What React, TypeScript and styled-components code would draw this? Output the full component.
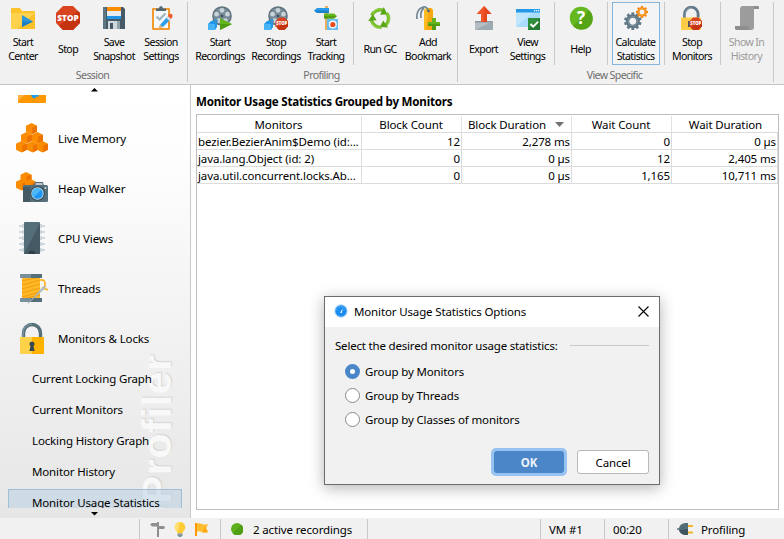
import React from "react";
import styled, { createGlobalStyle, css } from "styled-components";

const GlobalStyle = createGlobalStyle`
  * { box-sizing: border-box; }
  html, body { margin: 0; padding: 0; }
  body {
    width: 784px;
    height: 539px;
    overflow: hidden;
    font-family: "Noto Sans", "Open Sans", sans-serif;
    font-size: 11.5px;
    letter-spacing: -0.14px;
    color: #000;
    background: #f1f1f1;
  }
`;

const Window = styled.div`
  position: relative;
  width: 784px;
  height: 539px;
  display: grid;
  grid-template-rows: 85px 433px 21px;
  background: #f1f1f1;
`;

/* ---------- toolbar ---------- */

const Toolbar = styled.header`
  display: flex;
  border-bottom: 1px solid #c4c4c4;
  padding-top: 2px;
  font-size: 10.6px;
  letter-spacing: -0.62px;
`;

const ToolGroup = styled.section<{ $width: number }>`
  width: ${(p) => p.$width}px;
  height: 80px;
  display: flex;
  flex-direction: column;
  border-right: 1px solid #c8c8c8;
`;

const ToolRow = styled.div<{ $inset: number }>`
  display: flex;
  height: 63px;
  padding-left: ${(p) => p.$inset}px;
`;

const ToolButton = styled.button<{ $width: number; $active?: boolean; $disabled?: boolean }>`
  flex: 0 0 ${(p) => p.$width}px;
  height: 63px;
  display: flex;
  flex-direction: column;
  align-items: center;
  padding: ${(p) => (p.$active ? 3 : 4)}px 1px 0 0;
  margin: 0;
  border: ${(p) => (p.$active ? "1px solid #88b5da" : "0")};
  background: ${(p) => (p.$active ? "#f2f4f6" : "transparent")};
  font: inherit;
  letter-spacing: inherit;
  color: ${(p) => (p.$disabled ? "#9b9b9b" : "#000")};
  svg { display: block; flex: none; }
`;

const ToolLabel = styled.span`
  height: 28px;
  margin-top: 5px;
  display: flex;
  flex-direction: column;
  justify-content: center;
  line-height: 14px;
  white-space: nowrap;
`;

const ToolDivider = styled.div`
  flex: 0 0 1px;
  height: 63px;
  margin: 0 4px 0 4px;
  background: #c8c8c8;
`;

const GroupLabel = styled.div`
  flex: 1;
  text-align: center;
  line-height: 21px;
  padding-right: 2px;
  color: #6e6e6e;
`;

/* ---------- sidebar ---------- */

const Body = styled.div`
  display: grid;
  grid-template-columns: 191px 1fr;
  min-height: 0;
`;

const Sidebar = styled.nav`
  position: relative;
  display: grid;
  grid-template-rows: 10px 413px 10px;
  border-right: 1px solid #c8c8c8;
  background: linear-gradient(#ffffff, #fdfdfd 18%, #f1f1f1 60%, #e6e6e6);
  overflow: hidden;
`;

const Scroller = styled.div<{ $down?: boolean }>`
  display: flex;
  justify-content: center;
  padding-top: ${(p) => (p.$down ? 4 : 3)}px;
  padding-right: 1px;
  svg { display: block; }
`;

const NavViewport = styled.div`
  position: relative;
  overflow: hidden;
  display: flex;
  flex-direction: column;
`;

const Watermark = styled.div`
  position: absolute;
  left: 134px;
  bottom: -19px;
  width: 46px;
  line-height: 46px;
  writing-mode: vertical-rl;
  transform: rotate(180deg);
  font-family: "Liberation Sans", sans-serif;
  font-weight: 700;
  font-size: 41px;
  letter-spacing: 0.7px;
  color: #f8f8f8;
  text-shadow: 1px 1px 1px #d4d4d4;
  white-space: nowrap;
`;

const NavItem = styled.div`
  position: relative;
  flex: 0 0 50px;
  display: flex;
  align-items: center;
  padding-left: 16px;
  gap: 10px;
  svg { flex: none; }
`;

const NavPartial = styled.div`
  flex: 0 0 18px;
  padding-left: 16px;
  svg { display: block; }
`;

const SubItem = styled.div<{ $selected?: boolean }>`
  position: relative;
  flex: 0 0 31px;
  line-height: 29px;
  margin: 0 8px;
  padding-left: 23px;
  white-space: nowrap;
  border: 1px solid transparent;
  ${(p) =>
    p.$selected &&
    css`
      margin-top: 2px;
      flex-basis: 27px;
      line-height: 25px;
      border-color: #9fbfd6;
      background: rgba(183, 207, 226, 0.5);
    `}
`;

/* ---------- content ---------- */

const Content = styled.main`
  background: #fff;
  padding: 8px 5px 8px 5px;
  display: grid;
  grid-template-rows: 21px 1fr;
`;

const Heading = styled.h1`
  margin: 0;
  font-size: 11.6px;
  line-height: 18px;
  font-weight: 700;
  letter-spacing: -0.23px;
  white-space: nowrap;
`;

const TableFrame = styled.div`
  border: 1px solid #bebebe;
  letter-spacing: -0.11px;
`;

const TableRow = styled.div<{ $head?: boolean }>`
  display: grid;
  grid-template-columns: 165px 100px 110px 100px 106px;
  height: ${(p) => (p.$head ? 18 : 17)}px;
  border-bottom: 1px solid #dcdcdc;
`;

const HeadCell = styled.div`
  display: flex;
  align-items: center;
  justify-content: center;
  gap: 9px;
  margin: 1px 0;
  padding: 1px 1px 0 0;
  border-right: 1px solid #e2e2e2;
  line-height: 15px;
  white-space: nowrap;
  &:last-child { border-right-color: transparent; padding: 1px 0 0 2px; }
`;

const Cell = styled.div<{ $left?: boolean }>`
  line-height: 17px;
  padding: 0 1px;
  text-align: ${(p) => (p.$left ? "left" : "right")};
  border-right: 1px solid #dcdcdc;
  white-space: nowrap;
`;

/* ---------- dialog ---------- */

const Dialog = styled.div`
  position: absolute;
  left: 324px;
  top: 296px;
  width: 336px;
  height: 189px;
  border: 1px solid #6c6c6c;
  background: #f1f1f1;
  box-shadow: 0 3px 14px rgba(0, 0, 0, 0.3);
  display: grid;
  grid-template-rows: 30px 1fr 46px;
`;

const TitleBar = styled.div`
  display: flex;
  align-items: center;
  padding: 0 10px 2px 9px;
  background: #fff;
  svg { flex: none; }
`;

const TitleText = styled.span`
  flex: 1;
  margin-left: 6px;
  padding-top: 1px;
`;

const DialogBody = styled.div`
  padding: 10px 10px 0 10px;
`;

const Legend = styled.div`
  display: flex;
  align-items: center;
  justify-content: space-between;
  height: 16px;
  margin-bottom: 6px;
  letter-spacing: -0.19px;
`;

const Rule = styled.div`
  width: 79px;
  height: 1px;
  background: #c8c8c8;
`;

const RadioRow = styled.div`
  height: 24px;
  display: flex;
  align-items: center;
  padding-left: 10px;
  gap: 5px;
`;

const RadioDot = styled.span<{ $checked?: boolean }>`
  width: 15px;
  height: 15px;
  border-radius: 50%;
  background: #fff;
  border: ${(p) => (p.$checked ? "5px solid #4a86c8" : "1px solid #8a8a8a")};
`;

const Actions = styled.div`
  display: flex;
  justify-content: flex-end;
  gap: 10px;
  padding: 10px 10px 0 0;
`;

const DialogButton = styled.button<{ $primary?: boolean }>`
  width: ${(p) => (p.$primary ? 76 : 72)}px;
  height: ${(p) => (p.$primary ? 28 : 24)}px;
  margin-top: ${(p) => (p.$primary ? 0 : 2)}px;
  padding: 0;
  font: inherit;
  font-weight: ${(p) => (p.$primary ? 700 : 400)};
  letter-spacing: inherit;
  border-radius: ${(p) => (p.$primary ? 5 : 3)}px;
  border: ${(p) => (p.$primary ? "3px solid #97c3f3" : "1px solid #b9b9b9")};
  background: ${(p) => (p.$primary ? "#4a86c8" : "#fff")};
  background-clip: padding-box;
  color: ${(p) => (p.$primary ? "#eef3f9" : "#000")};
`;

/* ---------- status bar ---------- */

const StatusBar = styled.footer`
  display: flex;
  background: #f1f1f1;
`;

const StatusCell = styled.div<{ $width?: number; $pad?: number; $gap?: number }>`
  ${(p) => (p.$width ? `flex: 0 0 ${p.$width}px;` : "flex: 1;")}
  display: flex;
  align-items: center;
  gap: ${(p) => p.$gap ?? 0}px;
  padding: 0 0 0 ${(p) => p.$pad ?? 0}px;
  margin-top: 1px;
  border-right: 1px solid #c8c8c8;
  white-space: nowrap;
  &:last-child { border-right: 0; }
`;

/* ---------- icons ---------- */

const Icon24 = ({ children }: { children: React.ReactNode }) => (
  <svg width="24" height="24" viewBox="0 0 24 24">{children}</svg>
);
const Icon32 = ({ children }: { children: React.ReactNode }) => (
  <svg width="32" height="32" viewBox="0 0 32 32">{children}</svg>
);

const StopSign = ({ x = 0, y = 0, s = 24 }: { x?: number; y?: number; s?: number }) => (
  <g transform={`translate(${x} ${y}) scale(${s / 24})`}>
    <path d="M7 0h10l7 7v10l-7 7H7l-7-7V7z" fill="#d9431f" />
    <path d="M24 7v10l-7 7H7l-4-4L22 5z" fill="#c43410" />
    <text x="12" y="14.9" textAnchor="middle" fontSize="8.2" fontWeight="800" letterSpacing="0" fontFamily="Open Sans, sans-serif" fill="#fff">
      STOP
    </text>
  </g>
);

const StartCenterIcon = () => (
  <Icon24>
    <path d="M0 3q0-1 1-1h8l2 3h12q1 0 1 1v16q0 1-1 1H1q-1 0-1-1z" fill="#fdc32b" />
    <path d="M0 7h24v15q0 1-1 1H1q-1 0-1-1z" fill="#ffd24d" />
    <path d="M24 7v16H6z" fill="#fcc02a" />
    <path d="M11 9l11 6.500L11 21z" fill="#2b97d8" />
    <path d="M11 15.500h11L11 21z" fill="#1c7fc0" />
  </Icon24>
);

const SaveIcon = () => (
  <Icon24>
    <path d="M1 1h20l2 2v20H1z" fill="#455a66" />
    <path d="M1 1h3v22H1z" fill="#5d7683" />
    <path d="M5 1h14v4H5z" fill="#fb8c00" />
    <path d="M5 5h14v6H5z" fill="#e6ebee" />
    <path d="M5 10h14v3H5z" fill="#2196e8" />
    <path d="M6 15h12v8H6z" fill="#cfd8dc" />
    <path d="M8 17h3v6H8z" fill="#455a66" />
    <path d="M15 15h3v8h-3z" fill="#8fa2ab" />
  </Icon24>
);

const SessionSettingsIcon = () => (
  <Icon24>
    <rect x="3" y="2" width="18" height="22" rx="1" fill="#f29a2c" />
    <path d="M5 4h14v18H5z" fill="#f4f8fa" />
    <path d="M7 5V2.500h3q0-2.500 2-2.500t2 2.500h3V5z" fill="#526a78" />
    <path d="M7.500 10.500l3 3 6-6" stroke="#9fb3bd" strokeWidth="2.200" fill="none" />
    <path d="M11 19l7-8 3 3-7 7-4 1z" fill="#2ea0ea" />
    <path d="M11 19l-2 4 5-2z" fill="#e8b27a" />
    <path d="M18.500 10.500l1.500-2.500q2-1 3.500 1v2l-2 2.500z" fill="#ee5b31" />
    <path d="M17.200 11.800l1.500-1.700 3.400 3-1.700 1.900z" fill="#d4dde1" />
  </Icon24>
);

const ReelBase = () => (
  <>
    <circle cx="14" cy="10" r="9.800" fill="#5d707c" />
    <circle cx="14" cy="10" r="8.600" fill="#768b97" />
    <g fill="#c9d2d7">
      <circle cx="14" cy="4.300" r="2.400" />
      <circle cx="8.600" cy="8.200" r="2.400" />
      <circle cx="19.400" cy="8.200" r="2.400" />
      <circle cx="10.600" cy="14.600" r="2.400" />
      <circle cx="17.400" cy="14.600" r="2.400" />
    </g>
    <circle cx="14" cy="10" r="1.300" fill="#394c57" />
    <path d="M0 18l3-3h6v6l-2 3H0z" fill="#2196e8" />
    <path d="M0 18h7v6H0z" fill="#45b3f5" />
    <path d="M4 14.500l4-2 2 2-1 3z" fill="#3d8fc5" />
  </>
);
const StartRecordingsIcon = () => (
  <Icon24>
    <ReelBase />
    <path d="M12 12l12 6-12 6z" fill="#62b51c" />
    <path d="M12 18h12l-12 6z" fill="#4d9c12" />
  </Icon24>
);
const StopRecordingsIcon = () => (
  <Icon24>
    <ReelBase />
    <StopSign x={11.500} y={11.500} s={12.500} />
  </Icon24>
);

const TrackingIcon = () => (
  <Icon24>
    <path d="M11 0h3v24h-3z" fill="#e9ad63" />
    <path d="M0 4.500L3 2h12v5H3z" fill="#289bea" />
    <path d="M0 4.500h15V7H3z" fill="#1d82cc" />
    <path d="M10 7.500h10l3 2.500-3 2.500H10z" fill="#66b51f" />
    <path d="M10 10h13l-3 2.500H10z" fill="#529c15" />
    <path d="M13 13h11v11H13z" fill="#65bdf2" />
    <circle cx="18.800" cy="18.500" r="4" fill="#f5f9fb" />
    <circle cx="18.800" cy="18.500" r="2.600" fill="#e84b1e" />
  </Icon24>
);

const RecycleIcon = () => (
  <Icon24>
    {[0, 120, 240].map((a) => (
      <g key={a} transform={`rotate(${a} 12 12.500)`}>
        <path d="M3.900 9.500a8.800 8.800 0 0 1 11-5.200" fill="none" stroke="#74bd28" strokeWidth="3.400" />
        <path d="M4.500 8a8.800 8.800 0 0 1 9-5" fill="none" stroke="#95d14b" strokeWidth="1" />
        <path d="M15.800 1l3.600 7.400-7.200.3z" fill="#5aa619" />
      </g>
    ))}
  </Icon24>
);

const BookmarkIcon = () => (
  <Icon24>
    <path d="M8 4l2-2h5l2 2v20H8z" fill="#fdbc23" />
    <path d="M13 2h2l2 2v20H10z" fill="#f8a80e" />
    <path d="M1 13q-1-9 5-11.500Q11-.5 12.500 5M5 12q-1-7 3-10" fill="none" stroke="#718692" strokeWidth="1.700" />
    <circle cx="12.500" cy="5" r="1.300" fill="#51646f" />
    <path d="M16 12h4v4h4v4h-4v4h-4v-4h-4v-4h4z" fill="#62b51c" />
    <path d="M12 18h12v2h-4v4h-4v-4h-4z" fill="#4e9d14" />
  </Icon24>
);

const ExportIcon = () => (
  <Icon24>
    <path d="M3 15h18v9H3z" fill="#b6bec3" />
    <path d="M3 15h18v1.500H3z" fill="#8a99a2" />
    <path d="M3 24L21 15v9z" fill="#9eabb2" />
    <path d="M12 0l7.500 8H15v8H9V8H4.500z" fill="#f0562a" />
    <path d="M12 0l7.500 8H15v8h-3z" fill="#e5471c" />
  </Icon24>
);

const ViewSettingsIcon = () => (
  <Icon24>
    <path d="M0 3h24v18H0z" fill="#a8dcfa" />
    <path d="M0 21V6h17z" fill="#bfe6fc" />
    <path d="M0 3h24v3.500H0z" fill="#2499e8" />
    <path d="M18 4h1.300v1.300H18zM20 4h1.300v1.300H20zM22 4h1.300v1.300H22z" fill="#fff" />
    <path d="M12 12h12v12H12z" fill="#2f8e3b" />
    <path d="M24 12v12H12z" fill="#247a31" />
    <path d="M14.500 18l2.700 2.700 5-5" stroke="#fff" strokeWidth="1.800" fill="none" />
  </Icon24>
);

const HelpIcon = () => (
  <Icon24>
    <circle cx="12" cy="12" r="11.200" fill="#65b81f" />
    <path d="M20 4.200A11.200 11.200 0 1 1 4.200 20z" fill="#56a516" />
    <text x="12" y="17.800" fontSize="17" fontWeight="700" textAnchor="middle" letterSpacing="0" fill="#fff" fontFamily="Noto Sans, sans-serif">
      ?
    </text>
  </Icon24>
);

const Gear = ({ cx, cy, r, n, fill, w }: { cx: number; cy: number; r: number; n: number; fill: string; w: number }) => (
  <g transform={`translate(${cx} ${cy})`}>
    <circle r={r * 0.6} fill="none" stroke={fill} strokeWidth={r * 0.4} />
    {Array.from({ length: n }, (_, i) => (
      <rect key={i} x={-w / 2} y={-r} width={w} height={r * 0.35} fill={fill} transform={`rotate(${(360 / n) * i})`} />
    ))}
  </g>
);
const CalculateIcon = () => (
  <Icon24>
    <Gear cx={8.800} cy={15.200} r={8.800} n={10} w={2.800} fill="#607885" />
    <circle cx="8.800" cy="15.200" r="4.600" fill="none" stroke="#8398a3" strokeWidth="1" />
    <Gear cx={18} cy={6} r={6} n={8} w={2.200} fill="#f58a14" />
    <circle cx="18" cy="6" r="3.200" fill="none" stroke="#fbb04a" strokeWidth="0.900" />
  </Icon24>
);

const StopMonitorsIcon = () => (
  <Icon24>
    <path d="M4.500 13V8a6.800 6.800 0 0 1 13.600 0v5" fill="none" stroke="#61798a" strokeWidth="2.800" />
    <path d="M5.200 12V8a6 6 0 0 1 6-6" fill="none" stroke="#8ba1ac" strokeWidth="1" />
    <rect x="1" y="11.500" width="20" height="12.500" rx="1" fill="#ffcc45" />
    <path d="M8 15h2v6H8z" fill="#455a64" />
    <StopSign x={9.500} y={11.500} s={12.500} />
  </Icon24>
);

const ScrollIcon = () => (
  <Icon24>
    <path d="M8 0h14q2.500 0 2.500 3H19v18q0 3-3 3H2q-2.500 0-2.500-4H5V3q0-3 3-3z" fill="#9c9c9c" />
    <path d="M19 0h3q2.500 0 2.500 3H19zM2 24q-2.500 0-2.500-4H13q0 4 3 4z" fill="#8e8e8e" />
  </Icon24>
);

const Cube = ({ x, y }: { x: number; y: number }) => (
  <g transform={`translate(${x} ${y})`}>
    <path d="M0 2.700L5.500 0 11 2.700v6L5.500 11.400 0 8.700z" fill="#fb8c00" />
    <path d="M6.200 4.600L11 2.700v6l-4.800 2.500z" fill="#ee7200" />
  </g>
);
const LiveMemoryIcon = () => (
  <Icon32>
    <Cube x={10} y={1} />
    <Cube x={5} y={10} />
    <Cube x={16} y={10} />
    <Cube x={0} y={19} />
    <Cube x={11} y={19} />
    <Cube x={21} y={19} />
  </Icon32>
);
const HeapWalkerIcon = () => (
  <Icon32>
    <Cube x={4.500} y={0} />
    <Cube x={0} y={7} />
    <Cube x={9} y={7} />
    <path d="M17 14l2-4h8l1 4z" fill="#546a76" />
    <path d="M19.500 12h7" stroke="#dfe6e9" strokeWidth="1.500" />
    <rect x="7" y="13" width="25" height="17" rx="1.500" fill="#546e7a" />
    <path d="M7 15h7v15H7z" fill="#455a64" />
    <circle cx="21.500" cy="21.500" r="7.300" fill="#37474f" />
    <circle cx="21.500" cy="21.500" r="6.200" fill="#b7dff5" />
    <circle cx="21.500" cy="21.500" r="5.300" fill="#2196f3" />
    <path d="M17.700 25.200a5.300 5.300 0 0 1 7.500-7.500z" fill="#4db8f8" />
    <circle cx="29.500" cy="16" r="1" fill="#dfe6e9" />
  </Icon32>
);
const CpuIcon = () => (
  <Icon32>
    {[3, 9, 15, 21, 27].map((y) => (
      <path key={y} d={`M3 ${y}h3v-1h20v1h3v2h-3v1H6v-1H3z`} fill="#cdd7dc" />
    ))}
    <rect x="8" y="0" width="16" height="32" rx="1" fill="#546e7a" />
    <path d="M24 1v30q0 1-1 1H8z" fill="#455a64" />
    <path d="M12.500 32a3.500 3.500 0 0 1 7 0z" fill="#2f3e46" />
  </Icon32>
);
const ThreadsIcon = () => (
  <Icon32>
    <path d="M6 5h18v21H6z" fill="#fdb92a" />
    <path d="M6 9l18-4M6 13l18-5M6 17l18-5M6 21l18-5M6 25l18-5M10 26l14-3" stroke="#f59c0b" strokeWidth="1.200" />
    <rect x="4" y="2" width="22" height="4" rx="0.500" fill="#78909c" />
    <path d="M15 2h11v4H15z" fill="#546e7a" />
    <rect x="4" y="26" width="22" height="4" rx="0.500" fill="#78909c" />
    <path d="M15 26h11v4H15z" fill="#546e7a" />
    <path d="M24 8q5-1 5 4t-2 4 5 2" fill="none" stroke="#ffb51c" strokeWidth="1.700" />
    <path d="M12 31.500l15-16.500 2-1-.5 2.500z" fill="#b4c2c9" stroke="#94a5ad" strokeWidth="0.500" />
  </Icon32>
);
const LocksIcon = () => (
  <Icon32>
    <path d="M7.500 16v-5a8.500 8.500 0 0 1 17 0v5" fill="none" stroke="#546e7a" strokeWidth="3.400" />
    <path d="M7 16v-5a9 9 0 0 1 9-9" fill="none" stroke="#78909c" strokeWidth="1.600" />
    <rect x="4" y="15" width="24" height="17" rx="1" fill="#ffd24a" />
    <path d="M16 15h11q1 0 1 1v15q0 1-1 1H16z" fill="#ffb300" />
    <path d="M16 19.500a2.600 2.600 0 0 1 1.500 4.700L18.600 29h-5.200l1.100-4.800a2.600 2.600 0 0 1 1.500-4.700z" fill="#37474f" />
  </Icon32>
);
const PartialFolderIcon = () => (
  <svg width="32" height="8" viewBox="0 0 32 8">
    <path d="M2 0h28v7q0 1-1 1H3q-1 0-1-1z" fill="#ff9800" />
    <path d="M2 0h7L2 6z" fill="#ffb13b" />
    <path d="M15 0h8l-1 2-2-.5-1 2-3-1z" fill="#1e9be8" />
  </svg>
);

const SmallSign = () => (
  <svg width="15" height="15" viewBox="0 0 15 15">
    <path d="M0 2.500L2 1h5V0h2v4h5l1 1.500L14 7H9v8H7V4.500H2z" fill="#8f8f8f" />
  </svg>
);
const BulbIcon = () => (
  <svg width="12" height="15" viewBox="0 0 12 15">
    <path d="M6 0a5.200 5.200 0 0 1 3.500 9L8.500 11.500h-5L2.500 9A5.200 5.200 0 0 1 6 0z" fill="#fdcc35" />
    <path d="M6 0a5.200 5.200 0 0 0-3.500 9l1 2z" fill="#ffe070" />
    <path d="M3.500 11.500h5v2L7 15H5l-1.500-1.500z" fill="#8296a0" />
  </svg>
);
const FlagIcon = () => (
  <svg width="14" height="15" viewBox="0 0 14 15">
    <path d="M0 1h2v13H0z" fill="#ff9800" />
    <path d="M2 1.500q3-.5 5 .5t6 0l-2 4 2 4q-4 1-6 0t-5-.5z" fill="#ffbd2e" />
    <path d="M13 2l-2 4 2 4q-4 1-6 0z" fill="#ffa916" />
  </svg>
);
const PlugIcon = () => (
  <svg width="17" height="14" viewBox="0 0 17 14">
    <path d="M0 6h3v2H0z" fill="#78909c" />
    <path d="M11 1v12H8Q2 12 2 7t6-6z" fill="#546e7a" />
    <path d="M11 7v6H8Q3 12 2 8z" fill="#3f545f" />
    <path d="M11 3h5v2h-5zM11 9.500h5v2h-5z" fill="#f3b62c" />
  </svg>
);
const GaugeIcon = () => (
  <svg width="14" height="14" viewBox="0 0 14 14">
    <circle cx="7" cy="7" r="6.700" fill="#b5d9f8" />
    <circle cx="7" cy="7" r="5.700" fill="#1b8df0" />
    <path d="M2.800 6A4.300 4.300 0 0 1 11.200 6" fill="none" stroke="#7cc2fa" strokeWidth="1" strokeDasharray="1 1" />
    <path d="M8.800 4.500L7.800 9 6 8.500z" fill="#fff" />
  </svg>
);

/* ---------- data ---------- */

type Tool =
  | { divider: true }
  | { divider?: false; label: string[]; icon: React.ReactNode; width: number; active?: boolean; disabled?: boolean };

const GROUPS: { title: string; width: number; inset: number; tools: Tool[] }[] = [
  {
    title: "Session",
    width: 188,
    inset: 1,
    tools: [
      { label: ["Start", "Center"], icon: <StartCenterIcon />, width: 45 },
      { label: ["Stop"], icon: <Icon24><StopSign /></Icon24>, width: 45 },
      { label: ["Save", "Snapshot"], icon: <SaveIcon />, width: 47 },
      { label: ["Session", "Settings"], icon: <SessionSettingsIcon />, width: 47 },
    ],
  },
  {
    title: "Profiling",
    width: 270,
    inset: 4,
    tools: [
      { label: ["Start", "Recordings"], icon: <StartRecordingsIcon />, width: 57 },
      { label: ["Stop", "Recordings"], icon: <StopRecordingsIcon />, width: 55 },
      { label: ["Start", "Tracking"], icon: <TrackingIcon />, width: 45 },
      { divider: true },
      { label: ["Run GC"], icon: <RecycleIcon />, width: 45 },
      { label: ["Add", "Bookmark"], icon: <BookmarkIcon />, width: 51 },
    ],
  },
  {
    title: "View Specific",
    width: 316,
    inset: 4,
    tools: [
      { label: ["Export"], icon: <ExportIcon />, width: 44 },
      { label: ["View", "Settings"], icon: <ViewSettingsIcon />, width: 44 },
      { divider: true },
      { label: ["Help"], icon: <HelpIcon />, width: 44 },
      { divider: true },
      { label: ["Calculate", "Statistics"], icon: <CalculateIcon />, width: 48, active: true },
      { divider: true },
      { label: ["Stop", "Monitors"], icon: <StopMonitorsIcon />, width: 47 },
      { divider: true },
      { label: ["Show In", "History"], icon: <ScrollIcon />, width: 44, disabled: true },
    ],
  },
];

const NAV = [
  { label: "Live Memory", icon: <LiveMemoryIcon /> },
  { label: "Heap Walker", icon: <HeapWalkerIcon /> },
  { label: "CPU Views", icon: <CpuIcon /> },
  { label: "Threads", icon: <ThreadsIcon /> },
  { label: "Monitors & Locks", icon: <LocksIcon /> },
];
const SUB = ["Current Locking Graph", "Current Monitors", "Locking History Graph", "Monitor History", "Monitor Usage Statistics"];

const COLUMNS = ["Monitors", "Block Count", "Block Duration", "Wait Count", "Wait Duration"];
const ROWS = [
  ["bezier.BezierAnim$Demo (id:...", "12", "2,278 ms", "0", "0 µs"],
  ["java.lang.Object (id: 2)", "0", "0 µs", "12", "2,405 ms"],
  ["java.util.concurrent.locks.Ab...", "0", "0 µs", "1,165", "10,711 ms"],
];
const OPTIONS = ["Group by Monitors", "Group by Threads", "Group by Classes of monitors"];

export default function App() {
  return (
    <>
      <GlobalStyle />
      <Window>
        <Toolbar>
          {GROUPS.map((g) => (
            <ToolGroup key={g.title} $width={g.width}>
              <ToolRow $inset={g.inset}>
                {g.tools.map((t, i) =>
                  t.divider ? (
                    <ToolDivider key={i} />
                  ) : (
                    <ToolButton key={i} $width={t.width} $active={t.active} $disabled={t.disabled}>
                      {t.icon}
                      <ToolLabel>
                        {t.label.map((l) => (
                          <span key={l}>{l}</span>
                        ))}
                      </ToolLabel>
                    </ToolButton>
                  )
                )}
              </ToolRow>
              <GroupLabel>{g.title}</GroupLabel>
            </ToolGroup>
          ))}
        </Toolbar>

        <Body>
          <Sidebar>
            <Scroller>
              <svg width="7" height="4" viewBox="0 0 7 4"><path d="M0 3.500L3.500 0 7 3.500z" /></svg>
            </Scroller>
            <NavViewport>
              <Watermark>JProfiler</Watermark>
              <NavPartial><PartialFolderIcon /></NavPartial>
              {NAV.map((n) => (
                <NavItem key={n.label}>
                  {n.icon}
                  <span>{n.label}</span>
                </NavItem>
              ))}
              {SUB.map((s, i) => (
                <SubItem key={s} $selected={i === SUB.length - 1}>{s}</SubItem>
              ))}
            </NavViewport>
            <Scroller $down>
              <svg width="7" height="4" viewBox="0 0 7 4"><path d="M0 0L3.500 3.500 7 0z" /></svg>
            </Scroller>
          </Sidebar>

          <Content>
            <Heading>Monitor Usage Statistics Grouped by Monitors</Heading>
            <TableFrame>
              <TableRow $head>
                {COLUMNS.map((c) => (
                  <HeadCell key={c}>
                    {c}
                    {c === "Block Duration" && (
                      <svg width="9" height="5" viewBox="0 0 9 5"><path d="M0 0h9L4.500 5z" fill="#737373" /></svg>
                    )}
                  </HeadCell>
                ))}
              </TableRow>
              {ROWS.map((r) => (
                <TableRow key={r[0]}>
                  {r.map((v, i) => (
                    <Cell key={i} $left={i === 0}>{v}</Cell>
                  ))}
                </TableRow>
              ))}
            </TableFrame>
          </Content>
        </Body>

        <StatusBar>
          <StatusCell $width={140} />
          <StatusCell $width={81} $pad={10} $gap={9}>
            <SmallSign />
            <BulbIcon />
            <FlagIcon />
          </StatusCell>
          <StatusCell $width={147} $pad={10} $gap={10}>
            <svg width="12" height="12" viewBox="0 0 12 12">
              <circle cx="6" cy="6" r="6" fill="#5fae1c" />
              <path d="M10.200 1.800A6 6 0 1 1 1.800 10.200z" fill="#4f9e13" />
            </svg>
            <span>2 active recordings</span>
          </StatusCell>
          <StatusCell $width={173} />
          <StatusCell $width={64} $pad={8}>VM #1</StatusCell>
          <StatusCell $width={64} $pad={8}>00:20</StatusCell>
          <StatusCell $pad={8} $gap={7}>
            <PlugIcon />
            <span>Profiling</span>
          </StatusCell>
        </StatusBar>

        <Dialog>
          <TitleBar>
            <GaugeIcon />
            <TitleText>Monitor Usage Statistics Options</TitleText>
            <svg width="11" height="11" viewBox="0 0 11 11">
              <path d="M.5.5l10 10M10.500.5l-10 10" stroke="#000" strokeWidth="1.100" />
            </svg>
          </TitleBar>
          <DialogBody>
            <Legend>
              <span>Select the desired monitor usage statistics:</span>
              <Rule />
            </Legend>
            {OPTIONS.map((o, i) => (
              <RadioRow key={o}>
                <RadioDot $checked={i === 0} />
                <span>{o}</span>
              </RadioRow>
            ))}
          </DialogBody>
          <Actions>
            <DialogButton $primary>OK</DialogButton>
            <DialogButton>Cancel</DialogButton>
          </Actions>
        </Dialog>
      </Window>
    </>
  );
}
